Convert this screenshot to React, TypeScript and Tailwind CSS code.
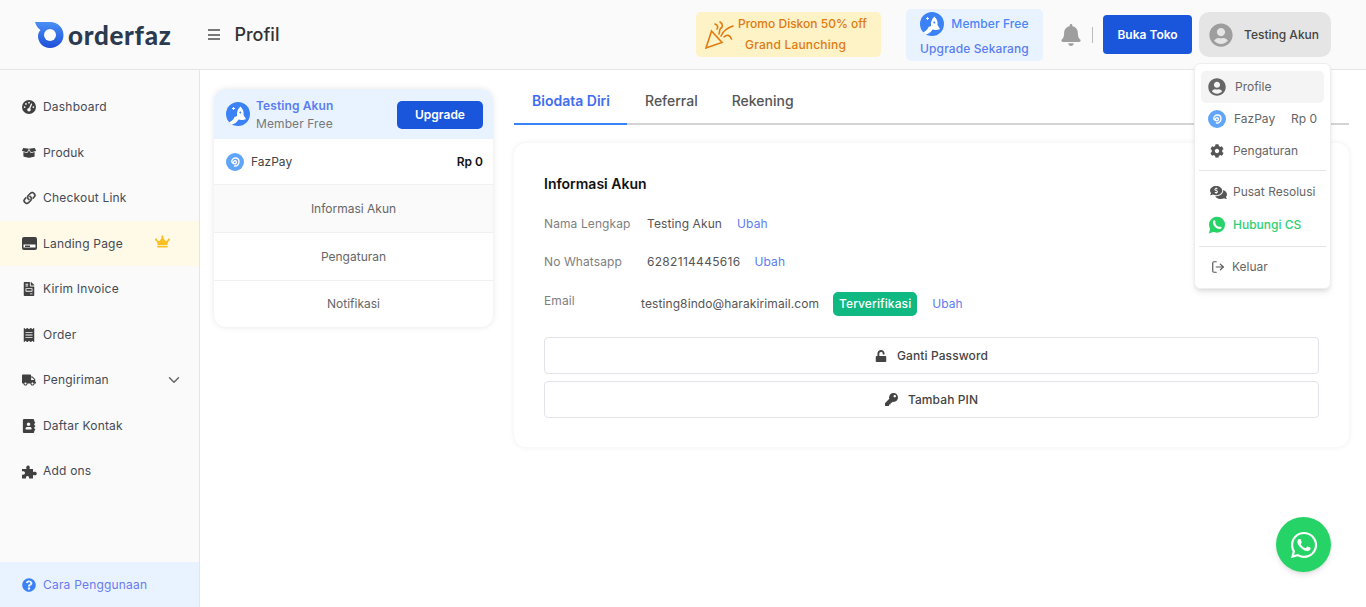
import { FiChevronDown, FiLogOut } from 'react-icons/fi'
import { BsLink45Deg } from 'react-icons/bs'
import { FaGaugeHigh } from 'react-icons/fa6'
import {
  FaAddressBook,
  FaBell,
  FaBoxOpen,
  FaCog,
  FaCommentsDollar,
  FaCrown,
  FaFileInvoice,
  FaKey,
  FaQuestionCircle,
  FaReceipt,
  FaTruck,
  FaUnlock,
  FaUserCircle,
  FaWhatsapp,
} from 'react-icons/fa'

function Logo() {
  return (
    <svg width="29" height="26" viewBox="0 0 29 26">
      <defs>
        <linearGradient id="logo-fill" x1="0" y1="0" x2="0" y2="1">
          <stop offset="0" stopColor="#4a90f5" />
          <stop offset="1" stopColor="#1d4ed8" />
        </linearGradient>
      </defs>
      <path d="M0 0H15C23 0 28.500 6 28.500 13C28.500 20.500 22.500 26 15 26C8 26 3 20.500 3 14C3 11.500 4 9.500 5.500 8C3 6.500 1 3.500 0 0Z" fill="url(#logo-fill)" />
      <circle cx="15" cy="13" r="6" fill="#fafafa" />
    </svg>
  )
}

function RocketBadge({ size = 24 }: { size?: number }) {
  return (
    <svg width={size} height={size} viewBox="0 0 24 24">
      <circle cx="12" cy="12" r="12" fill="#3b82f6" />
      <path d="M14.500 4.500C17 7 18 10 17.500 13L20 17C17 18.500 14 18 12.500 17.500C11 20 9 22 6 22.500L3 20.500C6 19 8 17 8.500 15L11 14C10.500 10 12 6.500 14.500 4.500Z" fill="#fff" />
      <circle cx="14.300" cy="10.500" r="1" fill="#3b82f6" />
      <path d="M6 6.500H9M7.500 5V8" stroke="#fff" strokeWidth="1" />
    </svg>
  )
}

function FazPayIcon({ size = 18 }: { size?: number }) {
  return (
    <svg width={size} height={size} viewBox="0 0 18 18">
      <circle cx="9" cy="9" r="9" fill="#60a5fa" />
      <path
        d="M7.300 9.300C7.500 7.800 9.300 7.300 10.200 8.300C11 9.300 10.200 10.800 9 10.800C7.800 10.800 5.800 10 5.800 8.500C5.800 6.500 7.600 5 9.500 5C11.500 5 13 6.700 13 8.800C13 11.300 11 13.200 8.500 13"
        fill="none"
        stroke="#fff"
        strokeWidth="1.400"
        strokeLinecap="round"
      />
    </svg>
  )
}

function PartyIcon() {
  return (
    <svg width="30" height="30" viewBox="0 0 30 30" fill="none" stroke="#e07b10" strokeWidth="1.600" strokeLinecap="round">
      <path d="M1 29L6.500 12L17 23.500Z" />
      <path d="M10 5C12.500 6 13.500 8 12 10" />
      <path d="M15 3C18 5 18 8 15.500 9.500C14 11 15 13 14 15" />
      <path d="M16 17C18 12 22 9 28 7" />
      <path d="M19 18C22 15 25 16 26.500 20" />
    </svg>
  )
}

function PuzzleIcon() {
  return (
    <svg width="15" height="15" viewBox="0 0 15 15" fill="#404040">
      <path d="M0 5H4.500C4 3.500 4 2 6 1.500C8 1.500 8 3.500 7.500 5H11V8C12.500 7.300 14.800 7.500 14.800 9.500C14.800 11.500 12.500 11.700 11 11V14.500H7C7.300 13 6.800 12 5.500 12C4.200 12 3.700 13 4 14.500H0V10.500C1.500 11 3 10.500 3 9C3 7.500 1.500 7 0 7.500Z" />
    </svg>
  )
}

function CardIcon() {
  return (
    <svg width="15" height="13" viewBox="0 0 15 13">
      <rect width="15" height="13" rx="2" fill="#404040" />
      <rect x="1.500" y="7.500" width="12" height="3" fill="#fff" />
      <rect x="3" y="8.500" width="5" height="1.500" fill="#404040" />
    </svg>
  )
}

function ChatBubbleIcon() {
  return (
    <svg width="18" height="18" viewBox="0 0 18 18">
      <circle cx="9" cy="8.700" r="8" fill="#25d366" />
      <path d="M0.800 17.500L2.500 11.500L6.500 15.500Z" fill="#25d366" />
      <path d="M6.300 5.300C5.800 7 6.400 8.800 7.800 10.200C9.200 11.600 11 12.200 12.500 11.800" fill="none" stroke="#fff" strokeWidth="2.200" strokeLinecap="round" />
    </svg>
  )
}

const menu = [
  { label: 'Dashboard', icon: <FaGaugeHigh size={14} /> },
  { label: 'Produk', icon: <FaBoxOpen size={14} /> },
  { label: 'Checkout Link', icon: <BsLink45Deg size={17} strokeWidth={0.6} className="-ml-[1px]" /> },
  { label: 'Landing Page', icon: <CardIcon /> },
  { label: 'Kirim Invoice', icon: <FaFileInvoice size={14} /> },
  { label: 'Order', icon: <FaReceipt size={14} /> },
  { label: 'Pengiriman', icon: <FaTruck size={14} /> },
  { label: 'Daftar Kontak', icon: <FaAddressBook size={14} /> },
  { label: 'Add ons', icon: <PuzzleIcon /> },
]

function Sidebar() {
  return (
    <aside className="flex h-full w-[200px] shrink-0 flex-col border-r border-[#e5e5e5] bg-[#fafafa] pt-[14.250px]">
      {menu.map(item => (
        <div
          key={item.label}
          className={`flex h-[45.500px] items-center pl-[22px] pr-[16px] text-[12px] tracking-[0.2px] text-[#444a55] ${
            item.label === 'Landing Page' ? 'bg-[#fff9e8]' : ''
          }`}
        >
          <span className="flex w-[21px] shrink-0 text-[#404040]">{item.icon}</span>
          <span>{item.label}</span>
          {item.label === 'Landing Page' && <FaCrown size={15} className="ml-auto mr-[13px] -mt-[4px] text-[#fbbf24]" />}
          {item.label === 'Pengiriman' && <FiChevronDown size={18} className="ml-auto text-[#666]" />}
        </div>
      ))}
      <div className="mt-auto flex h-[45px] items-center bg-[#e9f3ff] pl-[22px] text-[12px] tracking-[0.2px] text-[#6a7bf0]">
        <FaQuestionCircle size={14} className="mr-[7px] text-[#3b82f6]" />
        <span>Cara Penggunaan</span>
      </div>
    </aside>
  )
}

function Header() {
  return (
    <header className="flex h-[70px] shrink-0 items-center border-b border-[#e5e5e5] bg-[#fafafa] pl-[35px] pr-[35px]">
      <Logo />
      <span className="ml-[4px] font-['Lato',sans-serif] text-[26px] font-black leading-none tracking-[0.7px] text-[#2b3a4f]">orderfaz</span>
      <div className="ml-[37px] flex w-[12px] flex-col gap-[2.500px]">
        <span className="h-[2px] bg-[#777]" />
        <span className="h-[2px] bg-[#777]" />
        <span className="h-[2px] bg-[#777]" />
      </div>
      <h1 className="ml-[14px] text-[18px] font-medium text-[#333]">Profil</h1>

      <div className="ml-auto flex h-[45px] w-[185px] items-center rounded-[5px] bg-[#fef2c7] pb-[2px] pl-[9px] text-[12px] font-medium leading-[21px] text-[#e07b10]">
        <PartyIcon />
        <div className="ml-[3px]">
          <div>Promo Diskon 50% off</div>
          <div className="ml-[7px] tracking-[0.2px]">Grand Launching</div>
        </div>
      </div>

      <div className="ml-[25px] flex h-[52px] w-[137px] flex-col items-center rounded-[5px] bg-[#e9f3ff] pt-[3px] text-[12px] font-medium tracking-[0.1px]">
        <div className="flex items-center gap-[7px] text-[#4a86f7]">
          <RocketBadge />
          <span>Member Free</span>
        </div>
        <div className="mt-[4px] text-[#5a7df0]">Upgrade Sekarang</div>
      </div>

      <FaBell size={22} className="ml-[17px] text-[#9e9e9e]" />
      <span className="ml-[10px] h-[16px] w-px bg-[#bbb]" />
      <button className="ml-[10px] h-[39px] w-[89px] rounded-[4px] bg-[#1a56db] text-[12px] font-semibold text-white">Buka Toko</button>
      <div className="ml-[7px] flex h-[45px] w-[132px] items-center rounded-[10px] bg-[#e5e5e5] pl-[10px] text-[12px] font-medium text-[#444]">
        <FaUserCircle size={24} className="text-[#9e9e9e]" />
        <span className="ml-[11px]">Testing Akun</span>
      </div>
    </header>
  )
}

function UserMenu() {
  return (
    <div className="absolute left-[1194px] top-[63px] h-[226px] w-[137px] rounded-[6px] border border-[#eee] bg-white px-[6px] pt-[7px] text-[12px] text-[#666] shadow-md">
      <div className="flex h-[32px] items-center rounded-[5px] bg-[#f4f4f4] pl-[7px]">
        <FaUserCircle size={18} className="text-[#666]" />
        <span className="ml-[9px]">Profile</span>
      </div>
      <div className="flex h-[32px] items-center pl-[7px] pr-[7px]">
        <FazPayIcon />
        <span className="ml-[8px]">FazPay</span>
        <span className="ml-auto">Rp 0</span>
      </div>
      <div className="flex h-[32px] items-center pl-[9px]">
        <FaCog size={14} className="text-[#555]" />
        <span className="ml-[9px]">Pengaturan</span>
      </div>
      <div className="-mx-[2px] mt-[3px] h-px bg-[#e5e5e5]" />
      <div className="mt-[5px] flex h-[32px] items-center pl-[9px]">
        <FaCommentsDollar size={17} className="text-[#555]" />
        <span className="ml-[6px] whitespace-nowrap">Pusat Resolusi</span>
      </div>
      <div className="mt-[1px] flex h-[32px] items-center pl-[7px] font-medium text-[#2dd171]">
        <ChatBubbleIcon />
        <span className="ml-[7px]">Hubungi CS</span>
      </div>
      <div className="-mx-[2px] mt-[5px] h-px bg-[#e5e5e5]" />
      <div className="mt-[4px] flex h-[32px] items-center pl-[10px]">
        <FiLogOut size={14} className="text-[#555]" />
        <span className="ml-[7px]">Keluar</span>
      </div>
    </div>
  )
}

function ProfileCard() {
  return (
    <div className="w-[279px] shrink-0 overflow-hidden rounded-[12px] bg-white shadow-[0_0_6px_rgba(0,0,0,0.1)]">
      <div className="flex h-[50px] items-center bg-[#e9f3ff] pl-[12px] pr-[10px]">
        <RocketBadge />
        <div className="ml-[6px] pt-[1px] text-[12px] font-medium leading-[18px] tracking-[0.1px]">
          <div className="font-semibold text-[#5a7df0]">Testing Akun</div>
          <div className="font-normal text-[#777]">Member Free</div>
        </div>
        <button className="ml-auto mt-[2px] h-[28px] w-[86px] rounded-[5px] bg-[#1a56db] text-[12px] font-semibold text-white">Upgrade</button>
      </div>
      <div className="flex h-[46px] items-center border-b border-[#f1f1f1] pl-[12px] pr-[10px] text-[12px] text-[#444]">
        <FazPayIcon />
        <span className="ml-[7px]">FazPay</span>
        <span className="ml-auto font-semibold text-[#111]">Rp 0</span>
      </div>
      <div className="flex h-[48px] items-center justify-center border-b border-[#f1f1f1] bg-[#fafafa] text-[12px] text-[#666]">Informasi Akun</div>
      <div className="flex h-[48px] items-center justify-center border-b border-[#f1f1f1] text-[12px] text-[#666]">Pengaturan</div>
      <div className="flex h-[46px] items-center justify-center text-[12px] text-[#666]">Notifikasi</div>
    </div>
  )
}

function AccountInfo() {
  return (
    <div className="mt-[18px] h-[304px] rounded-[12px] bg-white px-[30px] pt-[32px] shadow-[0_0_6px_rgba(0,0,0,0.07)]">
      <h2 className="text-[14px] font-semibold leading-[18px] text-[#111]">Informasi Akun</h2>
      <div className="mt-[22px] flex h-[18px] items-center text-[12px] tracking-[0.1px]">
        <span className="w-[103px] text-[#808080]">Nama Lengkap</span>
        <span className="text-[#555]">Testing Akun</span>
        <span className="ml-[15px] text-[#5a7df0]">Ubah</span>
      </div>
      <div className="mt-[20px] flex h-[18px] items-center text-[12px] tracking-[0.1px]">
        <span className="w-[103px] text-[#808080]">No Whatsapp</span>
        <span className="tracking-[0.3px] text-[#555]">6282114445616</span>
        <span className="ml-[14px] text-[#5a7df0]">Ubah</span>
      </div>
      <div className="mt-[21px] flex h-[24px] items-center text-[12px] tracking-[0.1px]">
        <span className="-mt-[6px] w-[97px] text-[#808080]">Email</span>
        <span className="text-[#555]">testing8indo@harakirimail.com</span>
        <span className="ml-[14px] flex h-[24px] w-[84px] items-center justify-center rounded-[5px] bg-[#10b981] font-medium text-white">Terverifikasi</span>
        <span className="ml-[15px] text-[#5a7df0]">Ubah</span>
      </div>
      <button className="mt-[21px] flex h-[37px] w-full items-center justify-center rounded-[4px] border border-[#e2e2ea] text-[12px] font-medium tracking-[0.1px] text-[#444]">
        <FaUnlock size={12} className="mr-[10px] text-[#444]" />
        Ganti Password
      </button>
      <button className="mt-[7px] flex h-[37px] w-full items-center justify-center rounded-[4px] border border-[#e2e2ea] text-[12px] font-medium tracking-[0.1px] text-[#444]">
        <FaKey size={13} className="mr-[10px] text-[#444]" />
        Tambah PIN
      </button>
    </div>
  )
}

export default function App() {
  return (
    <div className="relative flex h-[607px] w-[1366px] flex-col overflow-hidden bg-white font-['Inter',sans-serif]">
      <Header />
      <div className="flex min-h-0 flex-1">
        <Sidebar />
        <main className="flex flex-1 items-start gap-[21px] pl-[14px] pr-[17px] pt-[19px]">
          <ProfileCard />
          <section className="min-w-0 flex-1">
            <div className="flex h-[36px] border-b-2 border-[#d4d4d4] text-[14px] font-medium text-[#555]">
              <div className="-mb-[2px] h-[36px] w-[113px] border-b-2 border-[#3b82f6] pl-[18px] leading-[24px] font-semibold text-[#3f6df2]">Biodata Diri</div>
              <div className="pl-[18px] leading-[24px]">Referral</div>
              <div className="pl-[34px] leading-[24px]">Rekening</div>
            </div>
            <AccountInfo />
          </section>
        </main>
      </div>
      <UserMenu />
      <button className="absolute left-[1276px] top-[517px] flex h-[55px] w-[55px] items-center justify-center rounded-full bg-[#25d366] text-white shadow-md">
        <FaWhatsapp size={30} />
      </button>
    </div>
  )
}
